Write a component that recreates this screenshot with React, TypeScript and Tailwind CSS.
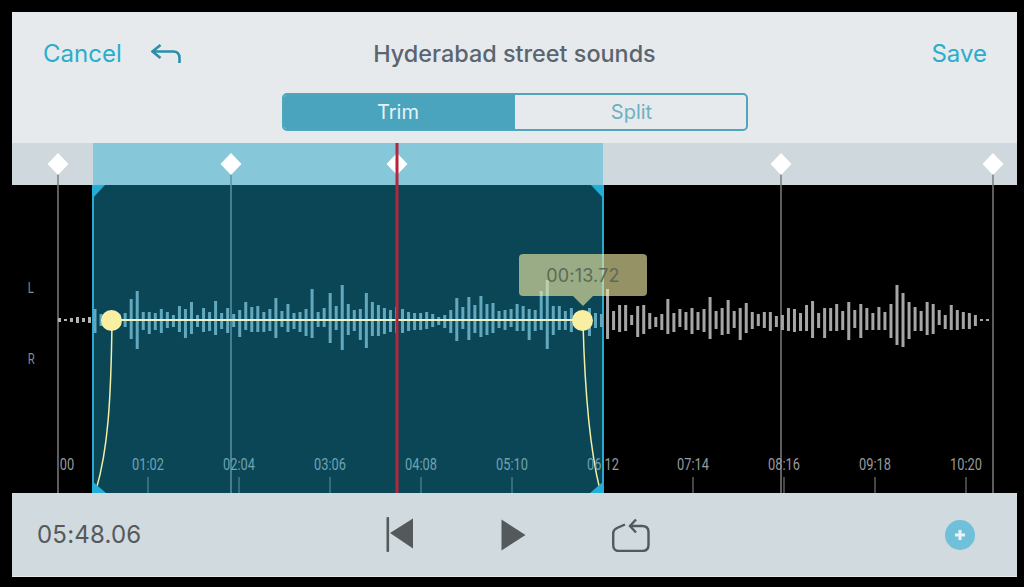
const font = { fontFamily: 'Inter, "Liberation Sans", sans-serif' };
const narrow = { fontFamily: 'Roboto, sans-serif' };

// [up, down] in px around the centre line, one pair per sample
const samples: [number, number][] = [
  [11, 13], [6, 6], [6, 6], [6, 6], [6, 6], [7, 7], [21, 19], [29, 29], [8, 10], [8, 14], [7, 10], [11, 13], [8, 8], [5, 7], [14, 12], [11, 18], [18, 14], [5, 7], [12, 12], [8, 11], [19, 15], [7, 9], [12, 13], [6, 7],
  [10, 17], [18, 10], [13, 12], [14, 12], [8, 12], [11, 11], [22, 18], [9, 7], [16, 12], [7, 9], [8, 12], [11, 16], [31, 18], [8, 7], [12, 7], [27, 23], [14, 10], [35, 30], [16, 15], [10, 11], [11, 20], [27, 28], [18, 16], [15, 16], [12, 14], [10, 12], [13, 13],
  [11, 13], [8, 11], [7, 10], [7, 10], [8, 9], [6, 7], [3, 5], [5, 8], [10, 13], [22, 21], [13, 9], [23, 20], [15, 13], [24, 17], [16, 15], [17, 13], [9, 8], [10, 10], [11, 7], [16, 11], [14, 11], [11, 20], [10, 11], [29, 10], [40, 29], [14, 15], [14, 10], [9, 10], [12, 12], [8, 8], [8, 8], [12, 16], [7, 8], [6, 7],
  [31, 19], [9, 10], [15, 12], [15, 11], [5, 5], [14, 17], [15, 14], [7, 9], [3, 7], [6, 10], [21, 14], [7, 12], [11, 7], [8, 10], [12, 14], [8, 10], [11, 12], [23, 19], [9, 9], [12, 15], [20, 14], [9, 8], [12, 20], [17, 13], [8, 9], [6, 6], [8, 8], [8, 11], [4, 7], [5, 10], [12, 11], [11, 12], [7, 11], [15, 11], [19, 18], [7, 8], [12, 18], [12, 11], [16, 11], [9, 10], [18, 20], [10, 8], [16, 18], [12, 10], [7, 10], [13, 10], [8, 10], [16, 18], [35, 25], [27, 27], [18, 19], [13, 11], [9, 11], [18, 15], [16, 14], [10, 5], [5, 9], [15, 10], [10, 10], [8, 9], [7, 9], [5, 6],
];
const leadIn = [[59, 2], [65, 1], [71, 2], [77, 3], [83, 2], [89, 3]];
const leadOut = [981, 987];

const markers = [58, 231, 397, 781, 993];
const ticks = [
  { x: 148, label: '01:02' },
  { x: 239, label: '02:04' },
  { x: 330, label: '03:06' },
  { x: 421, label: '04:08' },
  { x: 512, label: '05:10' },
  { x: 693, label: '07:14' },
  { x: 784, label: '08:16' },
  { x: 875, label: '09:18' },
  { x: 966, label: '10:20' },
];

const TimeLabel = ({ x, className, children }: { x: number; className?: string; children: React.ReactNode }) => (
  <span
    className={`absolute top-[312px] -translate-x-1/2 scale-x-[0.8] whitespace-nowrap text-[16px] leading-[20px] ${className ?? ''}`}
    style={{ left: x - 12, ...narrow }}
  >
    {children}
  </span>
);

const Waveform = () => (
  <svg className="absolute left-0 top-0" width="1005" height="350" viewBox="12 143 1005 350" fill="none">
    {/* marker stems */}
    {markers.filter((x) => x !== 397).map((x) => (
      <line key={x} x1={x} x2={x} y1="172" y2="493" stroke={x > 93 && x < 603 ? '#5c93a6' : '#7d7d7d'} strokeWidth="1.5" />
    ))}

    {/* bars */}
    {leadIn.map(([x, h]) => (
      <rect key={x} x={x - 1} y={320 - h} width="3" height={h * 2} fill="#b4b4b4" />
    ))}
    {samples.map(([up, down], i) => {
      const x = 95 + i * 6.03;
      return <rect key={i} x={x - 1.5} y={320 - up} width="3" height={up + down} fill={x < 603 ? '#62a9bf' : '#a6a6a6'} />;
    })}
    {leadOut.map((x) => (
      <rect key={x} x={x - 1} y="319" width="3" height="2" fill="#a6a6a6" />
    ))}

    {/* ruler ticks */}
    {ticks.map((t) => (
      <line key={t.x} x1={t.x} x2={t.x} y1="477" y2="493" stroke={t.x < 603 ? '#5c93a6' : '#8a8a8a'} strokeWidth="1" />
    ))}

    {/* fade line and curves */}
    <line x1="112" x2="583" y1="320" y2="320" stroke="#eef3c8" strokeWidth="2" />
    <path d="M112 322 C111 400 108 450 96 490" stroke="#f3efa5" strokeWidth="1.5" />
    <path d="M583 322 C585 400 590 450 600 490" stroke="#f3efa5" strokeWidth="1.5" />

    {/* trim corners */}
    <polygon points="92,185 105,185 92,199" fill="#22aed6" />
    <polygon points="604,185 591,185 604,199" fill="#22aed6" />
    <polygon points="92,493 106,493 92,481" fill="#22aed6" />
    <polygon points="604,493 590,493 604,481" fill="#22aed6" />

    {/* playhead and diamonds */}
    {markers.map((x) => (
      <polygon key={x} points={`${x},153 ${x + 10.5},164 ${x},175 ${x - 10.5},164`} fill="#ffffff" />
    ))}
    <rect x="395.5" y="143" width="3" height="350" fill="#b3263c" />
  </svg>
);

export default function App() {
  return (
    <div className="h-[587px] w-[1024px] overflow-hidden bg-black pl-3 pr-[7px] pt-3" style={font}>
      <div className="flex h-[131px] flex-col bg-[#e6eaec]">
        <div className="grid h-[81px] grid-cols-[1fr_auto_1fr] items-center pt-[3px]">
          <div className="flex items-center pl-[31px]">
            <span className="text-[24px] leading-none text-[#2aadcd]">Cancel</span>
            <svg className="ml-[29px]" width="30" height="20" viewBox="0 0 30 20" fill="none" stroke="#2a8fa8" strokeWidth="2.6">
              <path d="M9.5 1 L1.5 7.5 L9.5 14" />
              <path d="M1.5 7.5 H22 Q28.5 7.5 28.5 14 V19" />
            </svg>
          </div>
          <span className="text-[23.4px] font-medium leading-none text-[#5a6570]">Hyderabad street sounds</span>
          <span className="justify-self-end pr-[30px] text-[24px] leading-none text-[#2aadcd]">Save</span>
        </div>
        <div className="flex justify-center pl-px">
          <div className="flex h-[38px] w-[466px] overflow-hidden rounded-[5px] border-2 border-[#4fa5bc] text-[20px]">
            <span className="flex w-[231px] items-center justify-center bg-[#4aa4bd] pr-[3px] text-[#e8f2f5]">Trim</span>
            <span className="flex flex-1 items-center justify-center pl-[2px] text-[#6fb0c0]">Split</span>
          </div>
        </div>
      </div>

      <div className="relative">
        <div className="flex h-[42px] bg-[#cfd8dc]">
          <div className="w-[81px]" />
          <div className="w-[510px] bg-[#86c8da]" />
        </div>
        <div className="flex h-[308px] bg-black">
          <div className="w-[80px]" />
          <div className="w-[512px] border-x-2 border-[#29a9cf] bg-[#0b4656]" />
        </div>

        <Waveform />

        <span className="absolute left-[15px] top-[138px] scale-x-[0.8] text-[14px] leading-none text-[#8a8a8a]" style={narrow}>L</span>
        <span className="absolute left-[15px] top-[209px] scale-x-[0.8] text-[14px] leading-none text-[#8a8a8a]" style={narrow}>R</span>

        <TimeLabel x={67} className="text-[#9a9a9a]">00</TimeLabel>
        {ticks.map((t) => (
          <TimeLabel key={t.x} x={t.x} className={t.x < 603 ? 'text-[#6ea3b4]' : 'text-[#9a9a9a]'}>{t.label}</TimeLabel>
        ))}
        <TimeLabel x={603}>
          <span className="text-[#6ea3b4]">06:</span>
          <span className="text-[#9a9a9a]">12</span>
        </TimeLabel>

        {/* fade handles */}
        <div className="absolute left-[89px] top-[166.5px] size-[21px] rounded-full bg-[#f8efa2]" />
        <div className="absolute left-[560px] top-[166.5px] size-[21px] rounded-full bg-[#f8efa2]" />

        {/* time tooltip */}
        <div className="absolute left-[507px] top-[111px] flex h-[42px] w-[128px] items-center justify-center rounded-[4px] bg-[rgba(240,235,165,0.62)] text-[18px] tracking-[0.2px] text-[#5d6a58]">
          00:13.72
        </div>
        <div className="absolute left-[561px] top-[153px] size-0 border-x-[10px] border-t-[10px] border-x-transparent border-t-[rgba(240,235,165,0.62)]" />
      </div>

      <div className="flex h-[84px] items-center border-b border-[#e6eaec] bg-[#d0dadf] pl-[25px]">
        <span className="w-[349px] text-[24px] leading-none tracking-[0.2px] text-[#54595c]">05:48.06</span>
        <svg width="28" height="36" viewBox="0 0 28 36" fill="#54595c">
          <rect x="0.5" y="0" width="2.6" height="35" rx="1" />
          <polygon points="27,1.5 27,31.5 4,16" />
        </svg>
        <svg className="ml-[87px]" width="25" height="32" viewBox="0 0 25 32" fill="#54595c">
          <polygon points="0.5,0.5 24.5,16 0.5,31.5" />
        </svg>
        <svg className="ml-[86px]" width="38" height="34" viewBox="0 0 38 34" fill="none" stroke="#54595c" strokeWidth="2.4">
          <path d="M18 8 H30 Q36.500 8 36.500 14 V27 Q36.500 33 30 33 H7 Q1.200 33 1.200 27 V15 Q1.200 12 5 10 L13 6.500" />
          <path d="M24 1.500 L18 8 L24 14.500" />
        </svg>
        <div className="ml-[295px] flex size-[30px] items-center justify-center rounded-full bg-[#6fc0d8]">
          <svg width="12" height="12" viewBox="0 0 12 12" stroke="#e8f4f8" strokeWidth="3">
            <path d="M6 1 V11 M1 6 H11" />
          </svg>
        </div>
      </div>
    </div>
  );
}
